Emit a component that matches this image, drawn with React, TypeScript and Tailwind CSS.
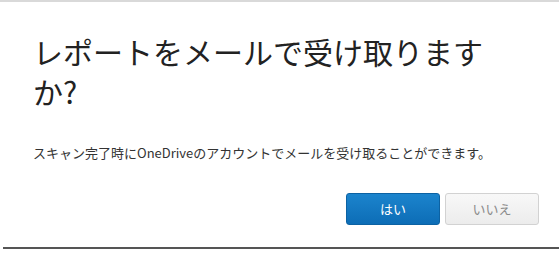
export default function App() {
  const font = { fontFamily: '"Noto Sans CJK JP", "Noto Sans", sans-serif' }

  return (
    <div
      className="flex h-[253px] w-[559px] flex-col overflow-hidden border-t-2 border-[#d9d9d9] bg-white"
      style={font}
    >
      <div className="flex flex-col pl-[33px] pr-[20px]">
        <h1 className="mt-[29px] pr-[56px] text-[30px] font-normal leading-[40px] text-[#222222]">
          レポートをメールで受け取りますか?
        </h1>

        <p className="mt-[32px] text-[13px] leading-[20px] text-[#333333]">
          スキャン完了時にOneDriveのアカウントでメールを受け取ることができます。
        </p>

        <div className="mt-[30px] flex justify-end gap-[5px]">
          <button className="h-[32px] w-[94px] rounded-[3px] border border-[#0c62a3] bg-gradient-to-b from-[#1b84cd] to-[#0d6db6] text-[13px] text-white">
            はい
          </button>
          <button className="h-[32px] w-[94px] rounded-[3px] border border-[#d2d2d2] bg-gradient-to-b from-[#f8f8f8] to-[#ececec] text-[13px] text-[#8a8a8a]">
            いいえ
          </button>
        </div>
      </div>

      <div className="ml-[3px] mt-[22px] h-[2px] bg-[#555555]" />
    </div>
  )
}
